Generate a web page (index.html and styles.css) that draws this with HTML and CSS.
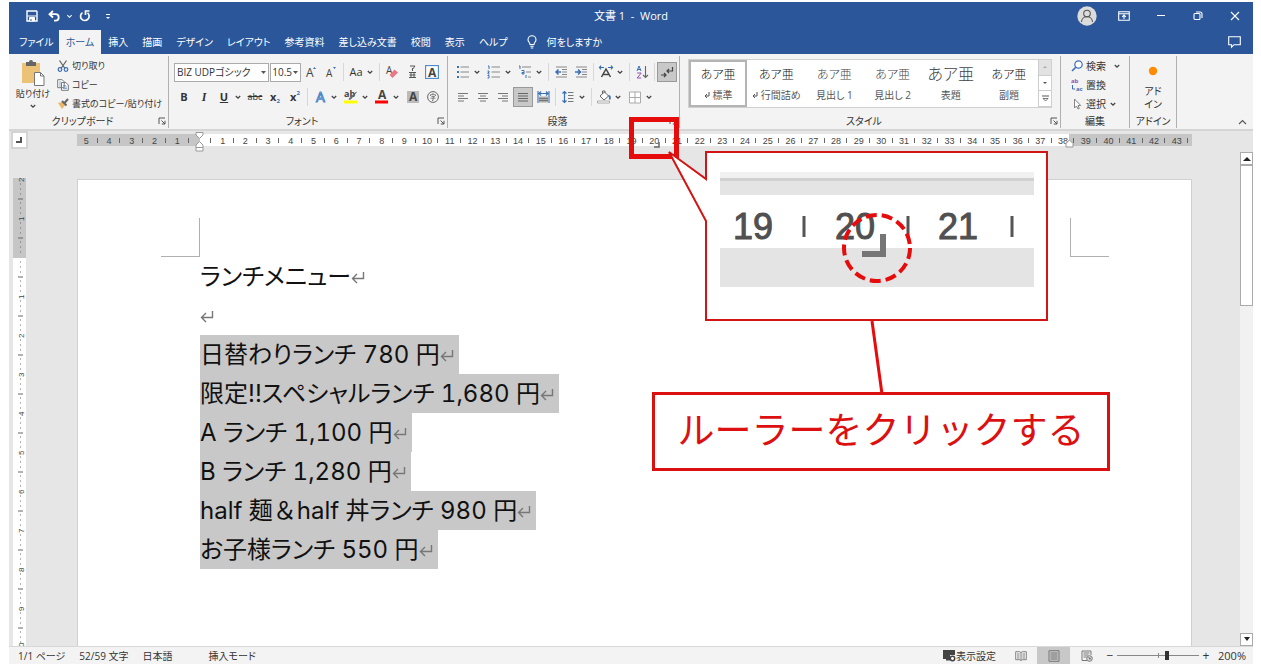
FILE: index.html
```html
<!DOCTYPE html>
<html lang="ja">
<head>
<meta charset="utf-8">
<meta name="viewport" content="width=device-width, initial-scale=1">
<title>文書 1 - Word</title>
<link rel="stylesheet" href="styles.css">
</head>
<body>
<svg class="defs" width="0" height="0" aria-hidden="true">
  <symbol id="caret" viewBox="0 0 8 8"><path d="M1.800 3l2.200 2.200L6.200 3" fill="none" stroke="#444" stroke-width="1.300"/></symbol>
  <symbol id="launch" viewBox="0 0 8 8"><path d="M1 7V1h6M3.500 3.500L7 7M7 3.800V7H3.800" fill="none" stroke="#555" stroke-width="1"/></symbol>
  <symbol id="ret" viewBox="0 0 14 14"><path d="M12.500 2v6.500H1.500M6 4L1.500 8.500 6 13" fill="none" stroke="#777" stroke-width="1.400"/></symbol>
  <symbol id="minirt" viewBox="0 0 6 6"><path d="M5 0v4H1M3 2L1 4l2 2" fill="none" stroke="#555" stroke-width="1"/></symbol>
</svg>

<div class="app">
  <header class="titlebar">
    <div class="quick">
      <button class="qa" aria-label="上書き保存"><svg width="12" height="12" viewBox="0 0 12 12"><path d="M1 1h9.500l.5.500V11H1z" fill="none" stroke="#fff" stroke-width="1.400"/><path d="M1.500 6h9M3.500 7.500h5V11h-5z" fill="#fff" stroke="#fff" stroke-width="1"/><path d="M5 9v2" stroke="#2b579a"/></svg></button>
      <button class="qa" aria-label="元に戻す"><svg width="12" height="12" viewBox="0 0 12 12"><path d="M5 1L1.500 4.200 5 7.500M2 4.200h5.500a3.200 3.200 0 0 1 0 6.400H6" fill="none" stroke="#fff" stroke-width="1.800"/></svg></button>
      <button class="qa slim" aria-label="元に戻す履歴"><svg width="7" height="7" viewBox="0 0 8 8"><path d="M1.500 2.500L4 5l2.500-2.500" fill="none" stroke="#fff" stroke-width="1.200"/></svg></button>
      <button class="qa wide" aria-label="やり直し"><svg width="12" height="12" viewBox="0 0 12 12"><path d="M3.500 2.600a4.300 4.300 0 1 0 5 .2" fill="none" stroke="#fff" stroke-width="1.700"/><path d="M6.500 5V1h4" fill="none" stroke="#fff" stroke-width="1.700"/></svg></button>
      <button class="qa" aria-label="クイックアクセスのカスタマイズ"><svg width="6" height="7" viewBox="0 0 6 7"><path d="M1 1.500h4" stroke="#fff"/><path d="M1 4h4L3 6z" fill="#fff"/></svg></button>
    </div>
    <h1 class="doc-title">文書 1 &nbsp;- &nbsp;Word</h1>
    <div class="window">
      <button class="win" aria-label="アカウント"><svg width="20" height="20" viewBox="0 0 20 20"><circle cx="10" cy="10" r="9.700" fill="#dcdcdc"/><circle cx="10" cy="7.500" r="3.300" fill="none" stroke="#555" stroke-width="1.100"/><path d="M4.500 16c0-7 11-7 11 0" fill="none" stroke="#555" stroke-width="1.100"/></svg></button>
      <button class="win" aria-label="リボンの表示オプション"><svg width="12" height="10" viewBox="0 0 12 10"><path d="M.700.700h10.600v8.600H.700zM.700 2.700h10.600M6 8V4.300M4.200 5.800L6 4l1.800 1.800" fill="none" stroke="#fff" stroke-width="1.100"/></svg></button>
      <button class="win" aria-label="最小化"><svg width="10" height="10" viewBox="0 0 10 10"><path d="M1 4.500h8" stroke="#fff"/></svg></button>
      <button class="win" aria-label="元のサイズに戻す"><svg width="10" height="10" viewBox="0 0 10 10"><rect x="1" y="2.500" width="6" height="6" rx="1" fill="none" stroke="#fff" stroke-width="1.100"/><path d="M3 1h4a2 2 0 0 1 2 2v4" fill="none" stroke="#fff" stroke-width="1.100"/></svg></button>
      <button class="win" aria-label="閉じる"><svg width="10" height="10" viewBox="0 0 10 10"><path d="M1 1l8 8M9 1L1 9" stroke="#fff" stroke-width="1.100"/></svg></button>
    </div>
  </header>

  <nav class="tabs">
    <button class="tab">ファイル</button>
    <button class="tab active">ホーム</button>
    <button class="tab">挿入</button>
    <button class="tab">描画</button>
    <button class="tab">デザイン</button>
    <button class="tab">レイアウト</button>
    <button class="tab">参考資料</button>
    <button class="tab">差し込み文書</button>
    <button class="tab">校閲</button>
    <button class="tab">表示</button>
    <button class="tab">ヘルプ</button>
    <button class="tab tell"><svg width="10" height="14" viewBox="0 0 10 14"><path d="M3 9.500C3 7.500 1 7 1 4.700a4 4 0 0 1 8 0C9 7 7 7.500 7 9.500zM3.300 11.300h3.400M3.800 13h2.400" fill="none" stroke="#fff" stroke-width="1.100"/></svg>何をしますか</button>
    <button class="comment" aria-label="コメント"><svg width="13" height="12" viewBox="0 0 13 12"><path d="M.700.700h11.600v8H6l-2.500 2.500V8.700H.700z" fill="none" stroke="#fff" stroke-width="1.100"/></svg></button>
  </nav>

  <section class="ribbon">
    <div class="group g-clip">
      <div class="body clip">
        <button class="paste">
          <svg width="24" height="26" viewBox="0 0 24 26"><path d="M1 3h18v20H1z" fill="#ecc277"/><path d="M5 2h3a2 2 0 0 1 4 0h3v4H5z" fill="#666"/><path d="M13.500 12.500h6l3.500 3.500v9.500h-9.500z" fill="#fff" stroke="#777"/><path d="M19.500 12.500V16H23" fill="none" stroke="#777"/></svg>
          <span>貼り付け</span>
          <svg width="8" height="8"><use href="#caret"/></svg>
        </button>
        <div class="stack">
          <button class="row"><svg width="12" height="12" viewBox="0 0 12 12"><path d="M2.500.500l5.500 8M9.500.500L4 8.500" stroke="#666" stroke-width="1.300"/><circle cx="3" cy="9.500" r="1.800" fill="none" stroke="#3b6fb5" stroke-width="1.200"/><circle cx="9" cy="9.500" r="1.800" fill="none" stroke="#3b6fb5" stroke-width="1.200"/></svg>切り取り</button>
          <button class="row"><svg width="12" height="12" viewBox="0 0 12 12"><path d="M.700.700h4.500l2 2v6H.700zM4.500 3.500h4.300l2.500 2.500v5.300H4.500z" fill="#fff" stroke="#777"/><path d="M2 3h2M2 5h2M2 7h2M6 6.500h3M6 8h4M6 9.500h4" stroke="#6a96cc" stroke-width=".8"/></svg>コピー</button>
          <button class="row"><svg width="12" height="12" viewBox="0 0 12 12"><path d="M1 5l4-1 3 3.500L5 11z" fill="#ecb865"/><path d="M5 3l4.500 4.500M7 5.500L11 1" stroke="#666" stroke-width="2"/></svg>書式のコピー/貼り付け</button>
        </div>
      </div>
      <div class="caption"><span>クリップボード</span><button class="launcher" aria-label="クリップボードの詳細"><svg width="8" height="8"><use href="#launch"/></svg></button></div>
    </div>

    <div class="group g-font">
      <div class="body tools">
        <div class="line">
          <select class="pick font-name" aria-label="フォント名"><option>BIZ UDPゴシック</option></select>
          <select class="pick font-size" aria-label="フォントサイズ"><option>10.5</option></select>
          <button class="ic" aria-label="フォントの拡大"><svg width="12" height="12" viewBox="0 0 12 12"><text x="1" y="11" class="g-a">A</text><path d="M8 3l1.500-2L11 3z" fill="#3b6fb5"/></svg></button>
          <button class="ic" aria-label="フォントの縮小"><svg width="12" height="12" viewBox="0 0 12 12"><text x="1" y="11" class="g-as">A</text><path d="M8 1h3L9.500 3z" fill="#3b6fb5"/></svg></button>
          <i class="sep"></i>
          <button class="split"><span class="t">Aa</span><svg width="8" height="8"><use href="#caret"/></svg></button>
          <i class="sep"></i>
          <button class="ic" aria-label="書式のクリア"><svg width="14" height="14" viewBox="0 0 14 14"><text x="1" y="9" class="g-as">A</text><path d="M9.500 4.500l3.500 3-5.500 5.500-3-3z" fill="#e8788a"/></svg></button>
          <button class="ic" aria-label="ルビ"><svg width="12" height="14" viewBox="0 0 12 14"><path d="M4 1h5L6 5M6.500 3v3M3 7.500h7M3 12.500h7M5 8v4M8 8v4M3.500 10h6" fill="none" stroke="#555"/></svg></button>
          <button class="ic" aria-label="囲み線"><svg width="14" height="14" viewBox="0 0 14 14"><rect x=".6" y=".6" width="12.800" height="12.800" fill="#fff" stroke="#4a86c8" stroke-width="1.100"/><text x="3" y="11.500" class="g-b">A</text></svg></button>
        </div>
        <div class="line">
          <button class="ic b">B</button>
          <button class="ic i">I</button>
          <button class="split"><span class="t u">U</span><svg width="8" height="8"><use href="#caret"/></svg></button>
          <button class="ic s">abc</button>
          <button class="ic x">x<sub>2</sub></button>
          <button class="ic x">x<sup>2</sup></button>
          <i class="sep"></i>
          <button class="split" aria-label="文字の効果"><svg width="14" height="14" viewBox="0 0 14 14"><text x="3" y="12" class="g-fx">A</text></svg><svg width="8" height="8"><use href="#caret"/></svg></button>
          <button class="split" aria-label="蛍光ペン"><svg width="14" height="14" viewBox="0 0 14 14"><text x="0" y="7" class="g-ab">ab</text><path d="M12.500 2L7 9l-2 .5L5.500 8z" fill="#777" stroke="#555" stroke-width=".6"/><path d="M0 10.500h13V13.500H0z" fill="#ff0"/></svg><svg width="8" height="8"><use href="#caret"/></svg></button>
          <button class="split" aria-label="フォントの色"><svg width="14" height="14" viewBox="0 0 14 14"><text x="3" y="9" class="g-b">A</text><path d="M0 10.500h13V13.500H0z" fill="#f00"/></svg><svg width="8" height="8"><use href="#caret"/></svg></button>
          <button class="ic" aria-label="文字の網かけ"><svg width="12" height="12" viewBox="0 0 12 12"><path d="M0 0h12v12H0z" fill="#bbb"/><text x="2" y="10" class="g-b">A</text></svg></button>
          <button class="ic" aria-label="囲い文字"><svg width="12" height="12" viewBox="0 0 12 12"><circle cx="6" cy="6" r="5.400" fill="none" stroke="#666"/><path d="M6 2v1.500M3.500 5V3.700h5V5M4.500 5.500h3L6 6.700V9.500H5M3.500 7.200h5" fill="none" stroke="#666" stroke-width=".8"/></svg></button>
        </div>
      </div>
      <div class="caption"><span>フォント</span><button class="launcher" aria-label="フォントの詳細"><svg width="8" height="8"><use href="#launch"/></svg></button></div>
    </div>

    <div class="group g-para">
      <div class="body tools">
        <div class="line">
          <button class="split" aria-label="箇条書き"><svg width="14" height="14" viewBox="0 0 14 14"><path d="M1 2h2M1 7h2M1 12h2" stroke="#3b6fb5" stroke-width="2"/><path d="M4.500 2H13M4.500 7H13M4.500 12H13" stroke="#888"/></svg><svg width="8" height="8"><use href="#caret"/></svg></button>
          <button class="split" aria-label="段落番号"><svg width="14" height="14" viewBox="0 0 14 14"><path d="M1 1h1v3M.500 6H2v1.500H1V9h1.500M.500 10.500H2V13H.500" fill="none" stroke="#3b6fb5"/><path d="M4.500 2H13M4.500 7H13M4.500 12H13" stroke="#888"/></svg><svg width="8" height="8"><use href="#caret"/></svg></button>
          <button class="split" aria-label="アウトライン"><svg width="14" height="14" viewBox="0 0 14 14"><path d="M1 1h1v3M3.500 5.500H6V9H4V7.500h2M8 10v3" fill="none" stroke="#3b6fb5"/><path d="M4 2h9M8 7h5M10 12h3" stroke="#888"/></svg><svg width="8" height="8"><use href="#caret"/></svg></button>
          <i class="sep"></i>
          <button class="ic" aria-label="インデントを減らす"><svg width="13" height="12" viewBox="0 0 13 12"><path d="M1 1h11M7 3.500h5M7 6h5M7 8.500h5M1 11h11" stroke="#888"/><path d="M6 6H1.500M3.500 3.500L1 6l2.500 2.500" fill="none" stroke="#3b6fb5" stroke-width="1.500"/></svg></button>
          <button class="ic" aria-label="インデントを増やす"><svg width="13" height="12" viewBox="0 0 13 12"><path d="M1 1h11M7 3.500h5M7 6h5M7 8.500h5M1 11h11" stroke="#888"/><path d="M0 6h5M3 3.500L5.500 6 3 8.500" fill="none" stroke="#3b6fb5" stroke-width="1.500"/></svg></button>
          <i class="sep"></i>
          <button class="split" aria-label="拡張書式"><svg width="14" height="14" viewBox="0 0 14 14"><path d="M0 2.500h5M9 2.500h5M2 .7L.500 2.500 2 4.300M12 .7l1.500 1.800L12 4.300" fill="none" stroke="#3b6fb5" stroke-width="1.200"/><path d="M2.500 12L7 4l4.500 8M4 9.500h6" fill="none" stroke="#444" stroke-width="1.500"/></svg><svg width="8" height="8"><use href="#caret"/></svg></button>
          <i class="sep"></i>
          <button class="ic" aria-label="並べ替え"><svg width="13" height="14" viewBox="0 0 13 14"><path d="M1 6l2-5 2 5M1.700 4.500h2.600" fill="none" stroke="#3b6fb5"/><path d="M1.200 8h4L1.200 13h4" fill="none" stroke="#9450b5"/><path d="M9.500 1v11.500M7 10l2.500 2.500L12 10" fill="none" stroke="#666" stroke-width="1.100"/></svg></button>
          <i class="sep"></i>
          <button class="ic on" aria-label="編集記号の表示"><svg width="14" height="12" viewBox="0 0 14 12"><path d="M12.500 1v4H7M9 3L7 5l2 2M1 9h5M4 7l2 2-2 2" fill="none" stroke="#444" stroke-width="1.200"/></svg></button>
        </div>
        <div class="line">
          <button class="ic" aria-label="左揃え"><svg width="12" height="12" viewBox="0 0 12 12"><path d="M1 2.500h10M1 5h6M1 7.500h10M1 10h6" stroke="#777"/></svg></button>
          <button class="ic" aria-label="中央揃え"><svg width="12" height="12" viewBox="0 0 12 12"><path d="M1 2.500h10M3 5h6M1 7.500h10M3 10h6" stroke="#777"/></svg></button>
          <button class="ic" aria-label="右揃え"><svg width="12" height="12" viewBox="0 0 12 12"><path d="M1 2.500h10M5 5h6M1 7.500h10M5 10h6" stroke="#777"/></svg></button>
          <button class="ic on" aria-label="両端揃え"><svg width="12" height="12" viewBox="0 0 12 12"><path d="M1 2.500h10M1 5h10M1 7.500h10M1 10h10" stroke="#666"/></svg></button>
          <button class="ic" aria-label="均等割り付け"><svg width="13" height="14" viewBox="0 0 13 14"><path d="M1 1v12M12 1v12M2 3.500h9M4 1.500l-2 2 2 2M9 1.500l2 2-2 2" fill="none" stroke="#3b6fb5" stroke-width="1.100"/><path d="M2 6.500h9v6H2z" fill="#aaa"/><path d="M2 8.500h9M2 10.500h9" stroke="#777"/></svg></button>
          <i class="sep"></i>
          <button class="split" aria-label="行間"><svg width="13" height="14" viewBox="0 0 13 14"><path d="M3 1v12M1 3.500l2-2 2 2M1 10.500l2 2 2-2" fill="none" stroke="#3b6fb5" stroke-width="1.200"/><path d="M6.500 2.500H12M6.500 5.500H12M6.500 8.500H12M6.500 11.500H12" stroke="#777"/></svg><svg width="8" height="8"><use href="#caret"/></svg></button>
          <i class="sep"></i>
          <button class="split" aria-label="塗りつぶし"><svg width="15" height="14" viewBox="0 0 15 14"><path d="M3.500 6L8 2l4 4-4.500 4zM6 4V1h2.500v2" fill="#fff" stroke="#666"/><path d="M12 5.500c2 1 1.500 3 1 4" fill="none" stroke="#3b6fb5" stroke-width="1.600"/><path d="M1 11h12v2H1z" fill="#fff" stroke="#999" stroke-width=".8"/></svg><svg width="8" height="8"><use href="#caret"/></svg></button>
          <button class="split" aria-label="罫線"><svg width="13" height="13" viewBox="0 0 13 13"><path d="M1 1h11v11H1zM6.500 1v11M1 6.500h11" fill="#fff" stroke="#aaa"/></svg><svg width="8" height="8"><use href="#caret"/></svg></button>
        </div>
      </div>
      <div class="caption"><span>段落</span><button class="launcher" aria-label="段落の詳細"><svg width="8" height="8"><use href="#launch"/></svg></button></div>
    </div>

    <div class="group g-style">
      <div class="body">
        <div class="gallery">
          <button class="style chosen"><b>あア亜</b><span><svg width="6" height="6"><use href="#minirt"/></svg> 標準</span></button>
          <button class="style"><b>あア亜</b><span><svg width="6" height="6"><use href="#minirt"/></svg> 行間詰め</span></button>
          <button class="style soft"><b>あア亜</b><span>見出し 1</span></button>
          <button class="style soft"><b>あア亜</b><span>見出し 2</span></button>
          <button class="style soft big"><b>あア亜</b><span>表題</span></button>
          <button class="style"><b>あア亜</b><span>副題</span></button>
          <div class="scroller">
            <button class="dim" aria-label="前の行"><svg width="6" height="4" viewBox="0 0 6 4"><path d="M1 3l2-2 2 2z" fill="#aaa"/></svg></button>
            <button aria-label="次の行"><svg width="6" height="4" viewBox="0 0 6 4"><path d="M1 1h4L3 3z" fill="#555"/></svg></button>
            <button aria-label="その他"><svg width="7" height="7" viewBox="0 0 7 7"><path d="M0 1h7" stroke="#555"/><path d="M1 3.500h5L3.500 6z" fill="none" stroke="#555" stroke-width=".8"/></svg></button>
          </div>
        </div>
      </div>
      <div class="caption"><span>スタイル</span><button class="launcher" aria-label="スタイルの詳細"><svg width="8" height="8"><use href="#launch"/></svg></button></div>
    </div>

    <div class="group g-edit">
      <div class="body stack">
        <button class="row"><svg width="12" height="12" viewBox="0 0 12 12"><circle cx="7.500" cy="4.500" r="3.700" fill="#fff" stroke="#3b6fb5" stroke-width="1.200"/><path d="M4.800 7.200L1 11" stroke="#3b6fb5" stroke-width="1.600"/></svg>検索<svg class="far" width="8" height="8"><use href="#caret"/></svg></button>
        <button class="row"><svg width="12" height="16" viewBox="0 0 12 16"><text x="0" y="6" class="g-ab2">ab</text><text x="5" y="14" class="g-ab3">ac</text><path d="M1.500 8v4H4" fill="none" stroke="#3b6fb5"/></svg>置換</button>
        <button class="row"><svg width="12" height="12" viewBox="0 0 12 12"><path d="M3.500 1v9l2-2 1.500 3 1.300-.6L7 7.500h2.700z" fill="#fff" stroke="#777" stroke-width=".9"/></svg>選択<svg width="8" height="8"><use href="#caret"/></svg></button>
      </div>
      <div class="caption"><span>編集</span></div>
    </div>

    <div class="group g-add">
      <div class="body">
        <button class="addin"><svg width="12" height="12" viewBox="0 0 12 12"><circle cx="6" cy="6" r="4.200" fill="#ff8c00"/></svg><span>アド<br>イン</span></button>
      </div>
      <div class="caption"><span>アドイン</span></div>
    </div>
    <button class="collapse" aria-label="リボンを折りたたむ"><svg width="9" height="6" viewBox="0 0 9 6"><path d="M1 5l3.500-3.500L8 5" fill="none" stroke="#555" stroke-width="1.100"/></svg></button>
  </section>

  <main class="work">
    <div class="left-rail">
      <button class="tabsel" aria-label="タブの種類"><svg width="6" height="6" viewBox="0 0 6 6"><path d="M5 0v5H0" fill="none" stroke="#555" stroke-width="2"/></svg></button>
      <div class="vruler">
        <svg width="13" height="470" viewBox="0 0 13 470">
          <defs><pattern id="vt" width="13" height="39" y="1" patternUnits="userSpaceOnUse"><path d="M7 5h1M7 10h1M7 15h1M5 20h5M7 24h1M7 29h1M7 34h1" stroke="#666"/></pattern></defs>
          <rect width="13" height="470" fill="url(#vt)"/>
          <g class="vnum">
            <text transform="translate(11 4) rotate(-90)">2</text><text transform="translate(11 43) rotate(-90)">1</text>
            <text transform="translate(11 121) rotate(-90)">1</text><text transform="translate(11 160) rotate(-90)">2</text><text transform="translate(11 199) rotate(-90)">3</text><text transform="translate(11 238) rotate(-90)">4</text><text transform="translate(11 277) rotate(-90)">5</text><text transform="translate(11 316) rotate(-90)">6</text><text transform="translate(11 355) rotate(-90)">7</text><text transform="translate(11 394) rotate(-90)">8</text><text transform="translate(11 433) rotate(-90)">9</text><text transform="translate(11 469) rotate(-90)">0</text>
          </g>
        </svg>
      </div>
    </div>

    <div class="canvas">
      <div class="hruler">
        <div class="units"><span>5</span><span>4</span><span>3</span><span>2</span><span>1</span><span></span><span>1</span><span>2</span><span>3</span><span>4</span><span>5</span><span>6</span><span>7</span><span>8</span><span>9</span><span>10</span><span>11</span><span>12</span><span>13</span><span>14</span><span>15</span><span>16</span><span>17</span><span>18</span><span>19</span><span>20</span><span>21</span><span>22</span><span>23</span><span>24</span><span>25</span><span>26</span><span>27</span><span>28</span><span>29</span><span>30</span><span>31</span><span>32</span><span>33</span><span>34</span><span>35</span><span>36</span><span>37</span><span>38</span><span>39</span><span>40</span><span>41</span><span>42</span><span>43</span></div>
        <svg class="indent first" width="9" height="20" viewBox="0 0 9 20"><path d="M1 .500h7V3L4.500 6.500 1 3zM4.500 9.500L8 13v2.500H1V13zM1 15.500h7v3.500H1z" fill="#fff" stroke="#999"/></svg>
        <svg class="indent end" width="9" height="9" viewBox="0 0 9 9"><path d="M4.500 1L8 4.500V8H1V4.500z" fill="#fff" stroke="#999"/></svg>
        <svg class="indent stop" width="6" height="6" viewBox="0 0 6 6"><path d="M5 0v5H0" fill="none" stroke="#666" stroke-width="1.500"/></svg>
      </div>
      <article class="page">
        <div class="margins"><i class="corner l"></i><i class="corner r"></i></div>
        <div class="text">
          <p><span>ランチメニュー<svg width="14" height="14"><use href="#ret"/></svg></span></p>
          <p><span><svg width="14" height="14"><use href="#ret"/></svg></span></p>
          <p><span class="sel">日替わりランチ 780 円<svg width="14" height="14"><use href="#ret"/></svg></span></p>
          <p><span class="sel">限定!!スペシャルランチ 1,680 円<svg width="14" height="14"><use href="#ret"/></svg></span></p>
          <p><span class="sel">A ランチ 1,100 円<svg width="14" height="14"><use href="#ret"/></svg></span></p>
          <p><span class="sel">B ランチ 1,280 円<svg width="14" height="14"><use href="#ret"/></svg></span></p>
          <p><span class="sel">half 麺<b class="amp">＆</b>half 丼ランチ 980 円<svg width="14" height="14"><use href="#ret"/></svg></span></p>
          <p><span class="sel">お子様ランチ 550 円<svg width="14" height="14"><use href="#ret"/></svg></span></p>
        </div>
      </article>
    </div>

    <div class="vscroll">
      <button aria-label="上へ"><svg width="8" height="5" viewBox="0 0 8 5"><path d="M0 5l4-4 4 4z" fill="#222"/></svg></button>
      <div class="thumb"></div>
      <button aria-label="下へ"><svg width="8" height="5" viewBox="0 0 8 5"><path d="M1 0h6L4 4z" fill="#222"/></svg></button>
    </div>
  </main>

  <footer class="status">
    <span class="st page-no">1/1 ページ</span>
    <span class="st">52/59 文字</span>
    <span class="st lang">日本語</span>
    <span class="st">挿入モード</span>
    <div class="views">
      <button class="disp"><svg width="13" height="12" viewBox="0 0 13 12"><path d="M0 0h12v5H7v4H0zM3 9h4v1.500H3z" fill="#444"/><circle cx="9.500" cy="8.500" r="2.200" fill="#fff" stroke="#444" stroke-width="1.500"/></svg>表示設定</button>
      <button class="vw" aria-label="閲覧モード"><svg width="12" height="10" viewBox="0 0 12 10"><path d="M6 1.500L4.500.700H.700v8h4L6 9.500l1.300-.8h4v-8H7.500zM6 1.500v8M2 3h2.500M2 5h2.500M2 7h2.500M7.500 3H10M7.500 5H10M7.500 7H10" fill="none" stroke="#777" stroke-width=".9"/></svg></button>
      <button class="vw cur" aria-label="印刷レイアウト"><svg width="12" height="12" viewBox="0 0 12 12"><path d="M1 .700h10v10.600H1zM2.500 3h7M2.500 5h7M2.500 7h7M2.500 9h7" fill="none" stroke="#777"/></svg></button>
      <button class="vw" aria-label="Web レイアウト"><svg width="12" height="12" viewBox="0 0 12 12"><path d="M6 10.500H1V1h9v4M2.500 3h6M2.500 5h5M2.500 7h3" fill="none" stroke="#777"/><circle cx="8.500" cy="8.500" r="2.800" fill="#ddd" stroke="#777"/><path d="M7 7l3 1-1 2z" fill="#666"/></svg></button>
      <button class="zb" aria-label="縮小">−</button>
      <input class="zoom" type="range" min="10" max="310" value="193" aria-label="ズーム">
      <button class="zb" aria-label="拡大">+</button>
      <span class="pct">200%</span>
    </div>
  </footer>

  <aside class="notes">
    <svg width="490" height="360" viewBox="625 115 490 360">
      <rect x="631.500" y="119.500" width="45" height="37" fill="none" stroke="#e60c0c" stroke-width="5"/>
      <path d="M706 152h341v168H706V221L669 152l37 27z" fill="#fff" stroke="#d21414" stroke-width="2"/>
      <path d="M720 172h314v115H720z" fill="#e4e4e4"/>
      <path d="M720 172h314v6H720z" fill="#f1f1f1"/>
      <path d="M720 178h314v3H720z" fill="#d0d0d0"/>
      <path d="M720 195h314v53H720z" fill="#fff"/>
      <path d="M804 216v21M908 216v21M1012 216v21" stroke="#555" stroke-width="3"/>
      <g class="bignum"><text x="733" y="239">19</text><text x="835" y="239">20</text><text x="938" y="239">21</text></g>
      <path d="M883 234v20H862" fill="none" stroke="#757575" stroke-width="6"/>
      <circle cx="877" cy="248" r="33" fill="none" stroke="#e60c0c" stroke-width="4" stroke-dasharray="11 5"/>
      <path d="M872 321l10 73" stroke="#e60c0c" stroke-width="3"/>
    </svg>
    <p class="label">ルーラーをクリックする</p>
  </aside>
</div>
</body>
</html>
```
FILE: styles.css
```css
* { box-sizing: border-box; }
body {
  margin: 0;
  background: #fff;
  font-family: "Open Sans", "Noto Sans CJK JP", sans-serif;
  font-size: 10px;
  line-height: 14px;
  color: #333;
  font-feature-settings: "palt";
}
button, select {
  font: inherit;
  font-feature-settings: inherit;
  color: inherit;
  background: none;
  border: 0;
  padding: 0;
  margin: 0;
  display: flex;
  align-items: center;
  justify-content: center;
  white-space: nowrap;
}
svg { display: block; flex: none; overflow: visible; }
.defs { position: absolute; }

.app {
  position: relative;
  margin: 2px 8px 5px 9px;
  height: calc(100vh - 7px);
  min-height: 500px;
  display: flex;
  flex-direction: column;
  background: #e6e6e6;
}

/* title bar */
.titlebar {
  flex: none;
  display: grid;
  grid-template-columns: 1fr auto 1fr;
  align-items: center;
  height: 28px;
  background: #2b579a;
  color: #fff;
}
.quick { display: flex; padding-left: 12px; }
.qa { width: 22px; height: 26px; }
.qa.slim { width: 8px; }
.qa.wide { width: 24px; }
.doc-title { margin: 0; font-size: 11px; font-weight: 400; }
.window { display: flex; justify-content: flex-end; }
.win { width: 37px; height: 26px; }

/* ribbon tabs */
.tabs {
  flex: none;
  display: flex;
  height: 24px;
  background: #2b579a;
  color: #fff;
}
.tab { padding: 0 7px; }
.tab:first-child { padding: 0 5px 0 10px; }
.tab.active { background: #f3f3f3; color: #2b579a; }
.tab.tell { gap: 10px; padding-left: 12px; }
.comment { margin-left: auto; width: 37px; }

/* ribbon */
.ribbon {
  flex: none;
  display: flex;
  height: 77px;
  padding: 2px 0 1px;
  background: #f3f3f3;
  border-bottom: 2px solid #d5d5d5;
}
.group {
  flex: none;
  display: flex;
  flex-direction: column;
  border-right: 1px solid #b0b0b0;
}
.body { flex: 1; }
.g-clip { width: 160px; }
.g-font { width: 279px; }
.g-para { width: 232px; }
.g-style { width: 381px; }
.g-edit { width: 69px; }
.g-add { width: 47px; }
.caption { display: flex; align-items: center; height: 14px; }
.caption span { flex: 1; text-align: center; }
.launcher { width: 12px; height: 12px; }

.clip { display: flex; font-size: 9px; }
.paste { flex-direction: column; width: 48px; height: 58px; gap: 1px; }
.stack { display: flex; flex-direction: column; }
.row { height: 19px; gap: 3px; justify-content: flex-start; }
.row .far { margin-left: 4px; }
.g-edit .row { padding-left: 10px; }

.tools { display: flex; flex-direction: column; gap: 5px; padding: 6px 5px 0; }
.line { display: flex; height: 20px; align-items: center; }
.ic { width: 20px; height: 20px; flex: none; }
.split { width: 31px; height: 20px; flex: none; }
.split > :first-child { min-width: 20px; text-align: center; }
.split > :last-child { margin-right: 3px; }
.sep { flex: none; width: 1px; height: 18px; margin: 0 2px; background: #d8d8d8; }
.on { background: #c8c8c8; border: 1px solid #999; }
.pick {
  appearance: none;
  height: 19px;
  padding: 0 10px 0 2px;
  border: 1px solid #ababab;
  background: #fff url("data:image/svg+xml,%3Csvg xmlns='http://www.w3.org/2000/svg' width='5' height='3'%3E%3Cpath d='M0 0h5L2.500 3z' fill='%23555'/%3E%3C/svg%3E") no-repeat right 2px center;
}
.font-name { width: 96px; margin-right: 1px; }
.font-size { width: 31px; padding: 0 0 0 1px; }
.t { font-size: 11px; }
.b { font-weight: 700; font-size: 11px; }
.i { font-family: "Liberation Serif", serif; font-style: italic; font-weight: 700; font-size: 12px; }
.u { font-weight: 700; text-decoration: underline; }
.s { text-decoration: line-through; font-size: 9px; }
.x { font-weight: 700; font-size: 11px; }
.x sub, .x sup { font-size: 6px; line-height: 6px; color: #3b6fb5; }
.x sub { align-self: flex-end; margin-bottom: 3px; }
.x sup { align-self: flex-start; margin-top: 3px; }
.g-a { font-size: 12px; fill: #444; }
.g-as { font-size: 10px; fill: #444; }
.g-b { font-size: 12px; font-weight: 700; fill: #444; }
.g-fx { font-size: 14px; fill: #fff; stroke: #4a86c8; stroke-width: 1px; }
.g-ab { font-size: 9px; font-weight: 700; fill: #444; }
.g-ab2 { font-size: 6px; font-weight: 700; fill: #9450b5; }
.g-ab3 { font-size: 6px; font-weight: 700; fill: #3b6fb5; }

.gallery {
  display: flex;
  height: 49px;
  margin: 3px 8px 0;
  background: #fff;
  border: 1px solid #d0d0d0;
}
.style { flex: 1; flex-direction: column; gap: 5px; color: #555; }
.style b { font-size: 12px; font-weight: 300; color: #111; line-height: 17px; }
.style.soft b { color: #444; }
.style.big b { font-size: 16px; }
.style span { display: flex; align-items: center; gap: 3px; }
.style.chosen { box-shadow: inset 0 0 0 2px #b4b4b4; }
.scroller { display: flex; flex-direction: column; width: 13px; border-left: 1px solid #ccc; }
.scroller button { flex: 1; border-bottom: 1px solid #ccc; }
.scroller .dim { background: #e2e2e2; }
.addin { flex-direction: column; width: 46px; padding-top: 9px; gap: 8px; }
.addin span { line-height: 13px; text-align: center; }
.collapse { margin-left: auto; align-self: flex-end; width: 21px; height: 12px; }

/* workspace */
.work { flex: 1; min-height: 0; display: flex; overflow: hidden; }
.left-rail { width: 17px; flex: none; display: flex; flex-direction: column; align-items: center; gap: 29px; }
.tabsel { width: 17px; height: 18px; background: #fff; border: 2px solid #d4d4d4; margin-left: 3px; flex: none; }
.vruler {
  flex: 1;
  min-height: 0;
  width: 13px;
  margin-left: 3px;
  overflow: hidden;
  background: linear-gradient(#c6c6c6 80px, #fff 80px);
}
.vnum { font-family: "Liberation Sans", sans-serif; font-size: 8px; fill: #444; }
.canvas { flex: 1; min-width: 0; display: flex; flex-direction: column; padding: 3px 48px 0 51px; }
.hruler {
  position: relative;
  flex: none;
  height: 12px;
  background: linear-gradient(90deg, #c6c6c6 123px, #fff 123px, #fff calc(100% - 123px), #c6c6c6 calc(100% - 123px));
}
.units {
  display: grid;
  grid-template-columns: repeat(49, 1fr);
  margin: 0 4px 0 -2px;
  font-family: "Liberation Sans", sans-serif;
  font-size: 9px;
  line-height: 14px;
  text-align: center;
  color: #444;
}
.units span { position: relative; height: 12px; }
.units span::after {
  content: "";
  position: absolute;
  right: 0;
  top: 4px;
  width: 1px;
  height: 5px;
  background: #666;
}
.indent { position: absolute; }
.first { left: 118px; top: -2px; }
.end { right: 118px; top: 5px; }
.stop { left: 577px; top: 8px; }

.page { flex: 1; min-height: 0; margin-top: 33px; background: #fff; border: 1px solid #d0d0d0; border-bottom: 0; overflow: hidden; }
.margins { display: flex; justify-content: space-between; padding: 38px 82px 0 83px; }
.corner { width: 39px; height: 39px; border-bottom: 1px solid #b0b0b0; }
.corner.l { border-right: 1px solid #b0b0b0; }
.corner.r { border-left: 1px solid #b0b0b0; }
.text {
  padding-left: 122px;
  color: #111;
  font-family: Inter, "Noto Sans CJK JP", sans-serif;
  font-size: 24px;
  line-height: 39px;
  font-feature-settings: "palt", "tnum";
}
.text p { margin: 0; height: 39px; display: flex; }
.text span { display: flex; align-items: center; white-space: pre; height: 39px; padding-right: 5px; }
.text .sel { background: #c8c8c8; }
.amp { font-weight: 400; font-feature-settings: normal; }

.vscroll { flex: none; width: 13px; padding-top: 21px; display: flex; flex-direction: column; background: linear-gradient(#e6e6e6 21px, #f1f1f1 21px); }
.vscroll button { flex: none; height: 13px; background: #fff; border: 1px solid #aaa; }
.vscroll button:last-child { margin-top: auto; }
.thumb { height: 141px; background: #fff; border: 1px solid #aaa; }

/* status bar */
.status { flex: none; display: flex; align-items: center; height: 18px; background: #f3f3f3; border-top: 1px solid #d8d8d8; padding-left: 9px; }
.st { margin-right: 14px; }
.lang { margin-right: 36px; }
.views { margin-left: auto; display: flex; align-items: center; height: 17px; padding-right: 7px; }
.disp { margin-right: 8px; }
.vw { width: 33px; height: 17px; }
.vw.cur { background: #c8c8c8; }
.zb { width: 14px; font-size: 12px; }
.zoom {
  appearance: none;
  width: 82px;
  height: 11px;
  margin: 0;
  background: linear-gradient(#888, #888) center / 1px 5px no-repeat, linear-gradient(#888, #888) center / 100% 1px no-repeat;
}
.zoom::-webkit-slider-thumb { appearance: none; width: 4px; height: 9px; background: #333; }
.pct { margin-left: 5px; font-size: 11px; }

/* annotations floating over the window */
.notes { position: absolute; left: 616px; top: 113px; }
.bignum { font-family: "Liberation Sans", sans-serif; font-size: 36px; fill: #505050; stroke: #505050; stroke-width: 1px; }
.label {
  position: absolute;
  left: 27px;
  top: 277px;
  width: 458px;
  height: 79px;
  margin: 0;
  border: 3px solid #dc1010;
  background: #fff;
  color: #dc1010;
  font-size: 37px;
  line-height: 70px;
  text-align: center;
  font-feature-settings: normal;
  white-space: nowrap;
}
```
